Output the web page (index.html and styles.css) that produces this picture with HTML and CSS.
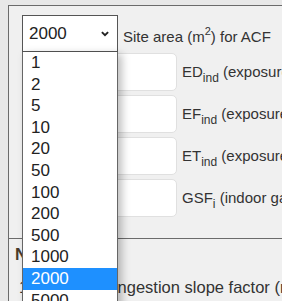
FILE: index.html
```html
<!DOCTYPE html>
<html>
<head>
<meta charset="utf-8">
<link rel="stylesheet" href="styles.css">
</head>
<body>
<div class="panel">
  <div class="row first">
    <div class="select"><span>2000</span><svg class="chev" width="8" height="6" viewBox="0 0 8 6"><path d="M0.9 1.1 L4 4.2 L7.1 1.1" fill="none" stroke="#222" stroke-width="1.9"/></svg></div>
    <span class="label">Site area (m<sup>2</sup>) for ACF</span>
  </div>
  <div class="row"><div class="input"></div><span class="label">ED<sub>ind</sub> (exposure duration)</span></div>
  <div class="row"><div class="input"></div><span class="label">EF<sub>ind</sub> (exposure frequency)</span></div>
  <div class="row"><div class="input"></div><span class="label">ET<sub>ind</sub> (exposure time)</span></div>
  <div class="row"><div class="input"></div><span class="label">GSF<sub>i</sub> (indoor gamma shielding)</span></div>
  <div class="rule"></div>
  <div class="heading">Nuclide</div>
  <div class="item"><span class="num">1.</span><span class="itext">Ingestion slope factor (mg/kg-day)<sup>-1</sup></span></div>

  <ul class="dropdown">
    <li>1</li><li>2</li><li>5</li><li>10</li><li>20</li><li>50</li><li>100</li><li>200</li><li>500</li><li>1000</li><li class="sel">2000</li><li>5000</li>
  </ul>
</div>
</body>
</html>
```

FILE: styles.css
```css
html, body {
  margin: 0;
  padding: 0;
  background: #e8e8e8;
  overflow: hidden;
  width: 282px;
  height: 301px;
}
body {
  font-family: "Liberation Sans", Arial, sans-serif;
  font-size: 15px;
  color: #333;
}
.panel {
  position: relative;
  margin: 5px 0 0 8px;
  border-top: 1px solid #6b6b6b;
  border-left: 1px solid #6b6b6b;
  background: #f0f0f0;
  padding: 9px 0 0 13px;
  height: 400px;
  white-space: nowrap;
  overflow: hidden;
}
.row {
  display: flex;
  align-items: center;
  height: 38px;
  margin-bottom: 4px;
}
.row.first {
  height: 37px;
  margin-bottom: 1px;
}
.select {
  box-sizing: border-box;
  width: 96px;
  height: 37px;
  border: 1px solid #555;
  background: #fff;
  display: flex;
  align-items: center;
  justify-content: space-between;
  padding: 0 8px 0 6px;
  color: #222;
  font-size: 17px;
  flex: none;
}
.chev { display: block; }
.label {
  margin-left: 5px;
  line-height: 20px;
}
.row.first .label { margin-top: 7px; }
sup { font-size: 11px; vertical-align: 7px; line-height: 0; }
sub { font-size: 12px; vertical-align: -5px; line-height: 0; }
.input {
  box-sizing: border-box;
  width: 155px;
  height: 38px;
  background: #fff;
  border: 1px solid #e0e0e0;
  border-radius: 5px;
  flex: none;
}
.rule {
  margin: 21px 0 0 -13px;
  border-top: 1px solid #6b6b6b;
}
.heading {
  font-weight: bold;
  font-size: 17px;
  margin: 6px 0 0 -7px;
  color: #4a3a2a;
  line-height: 20px;
}
.item {
  display: flex;
  margin: 12px 0 0 -3px;
  line-height: 20px;
  font-size: 16.5px;
}
.num { width: 94px; flex: none; }
.dropdown {
  position: absolute;
  left: 13px;
  top: 46px;
  width: 96px;
  box-sizing: border-box;
  margin: 0;
  padding: 0;
  list-style: none;
  background: #fff;
  border-left: 1px solid #666;
  border-right: 1px solid #666;
  box-shadow: 4px 2px 8px rgba(0,0,0,0.25);
  color: #222;
  font-size: 17px;
}
.dropdown li {
  height: 21.6px;
  line-height: 21.6px;
  padding-left: 8px;
}
.dropdown li.sel {
  background: #1e90ff;
  color: #fff;
}
```
